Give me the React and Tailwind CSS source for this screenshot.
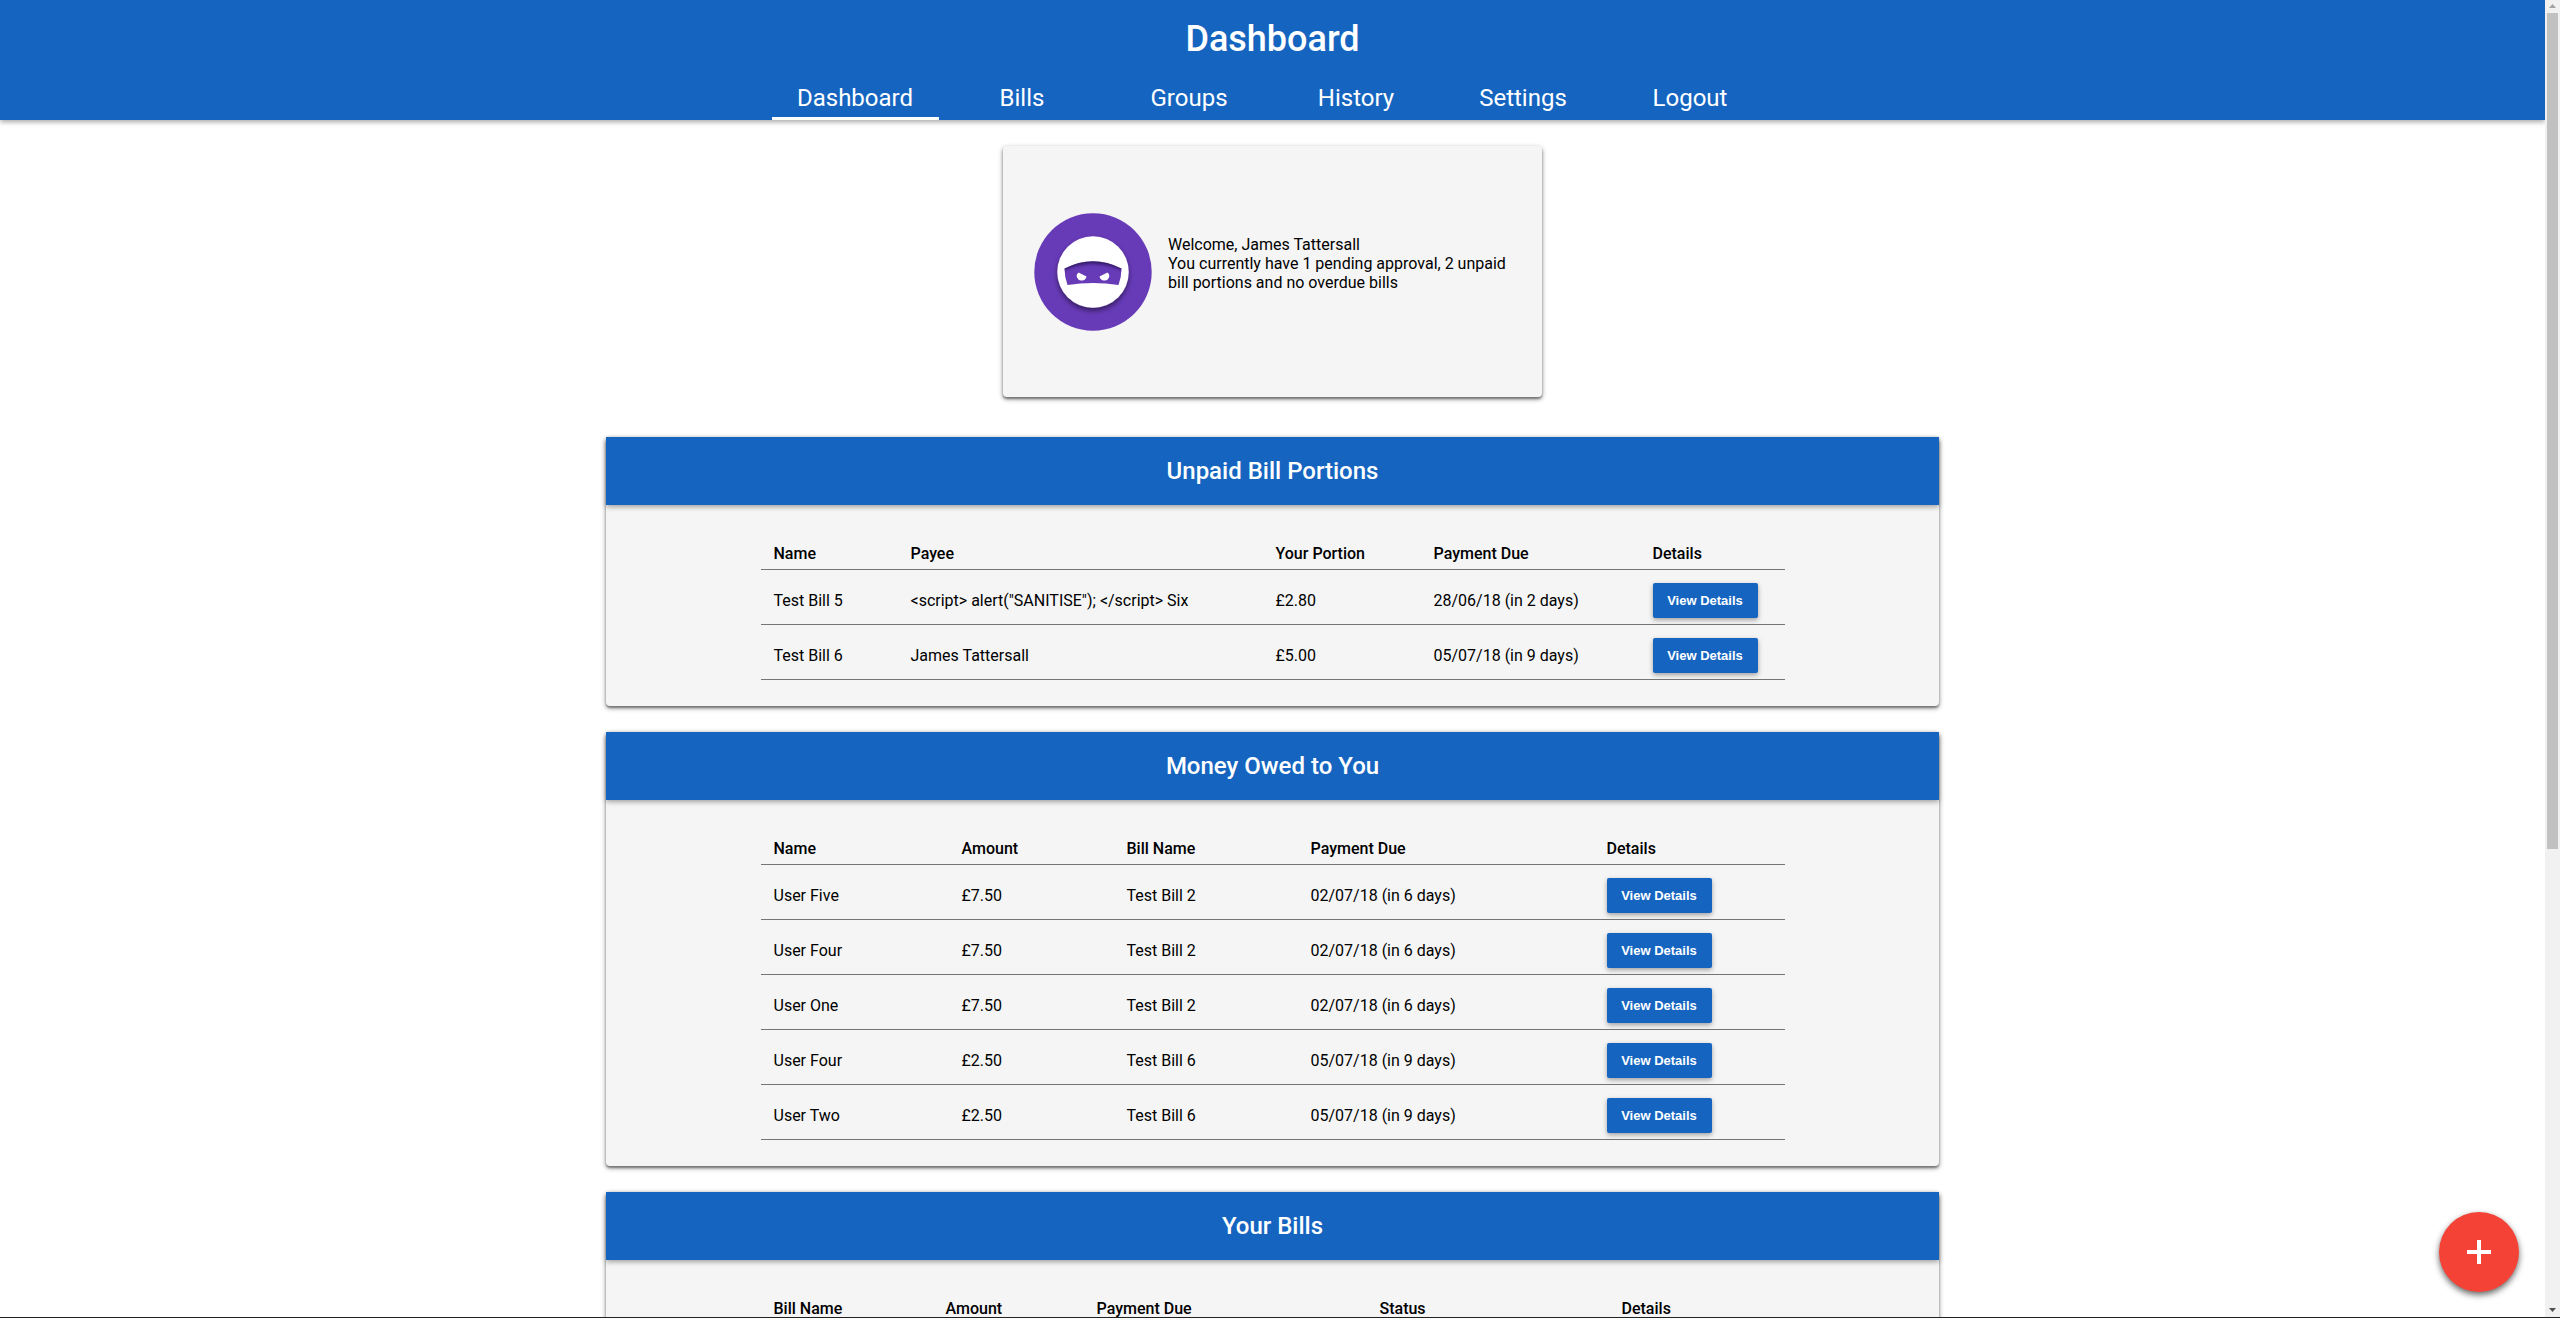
const navItems = ["Dashboard", "Bills", "Groups", "History", "Settings", "Logout"];

const sections = [
  {
    title: "Unpaid Bill Portions",
    columns: [
      { label: "Name", width: "w-[150px]" },
      { label: "Payee", width: "w-[365px]" },
      { label: "Your Portion", width: "w-[158px]" },
      { label: "Payment Due", width: "w-[219px]" },
      { label: "Details", width: "w-auto" },
    ],
    rows: [
      ["Test Bill 5", '<script> alert("SANITISE"); </script> Six', "£2.80", "28/06/18 (in 2 days)"],
      ["Test Bill 6", "James Tattersall", "£5.00", "05/07/18 (in 9 days)"],
    ],
  },
  {
    title: "Money Owed to You",
    columns: [
      { label: "Name", width: "w-[201px]" },
      { label: "Amount", width: "w-[165px]" },
      { label: "Bill Name", width: "w-[184px]" },
      { label: "Payment Due", width: "w-[296px]" },
      { label: "Details", width: "w-auto" },
    ],
    rows: [
      ["User Five", "£7.50", "Test Bill 2", "02/07/18 (in 6 days)"],
      ["User Four", "£7.50", "Test Bill 2", "02/07/18 (in 6 days)"],
      ["User One", "£7.50", "Test Bill 2", "02/07/18 (in 6 days)"],
      ["User Four", "£2.50", "Test Bill 6", "05/07/18 (in 9 days)"],
      ["User Two", "£2.50", "Test Bill 6", "05/07/18 (in 9 days)"],
    ],
  },
  {
    title: "Your Bills",
    columns: [
      { label: "Bill Name", width: "w-[185px]" },
      { label: "Amount", width: "w-[151px]" },
      { label: "Payment Due", width: "w-[283px]" },
      { label: "Status", width: "w-[242px]" },
      { label: "Details", width: "w-auto" },
    ],
    rows: [],
  },
];

function Header() {
  return (
    <header className="relative z-10 flex flex-col items-center gap-6 bg-[#1565c0] pt-[18px] text-white shadow-[0_2px_5px_rgba(0,0,0,0.35)]">
      <h1 className="text-4xl leading-[42px] font-medium">Dashboard</h1>
      <nav className="flex">
        {navItems.map((item, i) => (
          <a
            key={item}
            href="#"
            aria-current={i === 0 ? "page" : undefined}
            className={
              "w-[167px] border-b-3 pb-[5px] text-center text-2xl leading-[28px] " +
              (i === 0 ? "border-white" : "border-transparent")
            }
          >
            {item}
          </a>
        ))}
      </nav>
    </header>
  );
}

function NinjaAvatar() {
  return (
    <svg viewBox="0 0 118 118" className="size-[118px] shrink-0" role="img" aria-label="Avatar">
      <defs>
        <filter id="faceShadow" x="-20%" y="-20%" width="140%" height="150%">
          <feDropShadow dx="0" dy="3" stdDeviation="2.5" floodColor="#000" floodOpacity="0.5" />
        </filter>
        <clipPath id="maskClip">
          <path d="M30.5 55.5 Q59 41 87.5 55.5 Q87.5 64 84.5 72 Q59 68 33.5 72 Q30.5 64 30.5 55.5Z" />
        </clipPath>
        <filter id="soft" x="-20%" y="-60%" width="140%" height="220%">
          <feGaussianBlur stdDeviation="1.8" />
        </filter>
      </defs>
      <circle cx="59" cy="59" r="58.7" fill="#673ab7" />
      <circle cx="59" cy="59" r="35.7" fill="#fff" filter="url(#faceShadow)" />
      <g clipPath="url(#maskClip)">
        <rect x="26" y="44" width="66" height="32" fill="#673ab7" />
        <path d="M28 55.5 Q59 41 90 55.5" fill="none" stroke="#1d0a45" strokeWidth="5" opacity="0.7" filter="url(#soft)" />
      </g>
      <path d="M44.5 59.5 L52.5 63.5 Q51.5 67.5 48 67.5 A4.5 4.5 0 0 1 44.5 59.5Z" fill="#fff" />
      <path d="M73.5 59.5 L65.5 63.5 Q66.5 67.5 70 67.5 A4.5 4.5 0 0 0 73.5 59.5Z" fill="#fff" />
    </svg>
  );
}

function WelcomeCard() {
  return (
    <section className="mx-auto flex min-h-[251px] w-full max-w-[539px] items-center gap-4 rounded-sm bg-[#f5f5f5] px-[31px] shadow-[0_2px_2px_rgba(0,0,0,0.3),0_2px_5px_rgba(0,0,0,0.45)]">
      <NinjaAvatar />
      <p className="pb-4 text-base leading-[19px]">
        Welcome, James Tattersall
        <br />
        You currently have 1 pending approval, 2 unpaid bill portions and no overdue bills
      </p>
    </section>
  );
}

function BillSection({ title, columns, rows }) {
  return (
    <section className="mx-auto w-full max-w-[1333px] rounded-sm bg-[#f5f5f5] shadow-[0_2px_2px_rgba(0,0,0,0.3),0_2px_5px_rgba(0,0,0,0.45)]">
      <h2 className="bg-[#1565c0] py-5 text-center text-2xl leading-[28px] font-medium text-white shadow-[0_2px_5px_rgba(0,0,0,0.35)]">
        {title}
      </h2>
      <div className="mx-auto max-w-[1024px] pt-[39px] pb-[26px]">
        <table className="w-full table-fixed border-separate border-spacing-0 text-left text-base leading-[19px]">
          <thead>
            <tr>
              {columns.map((c) => (
                <th
                  key={c.label}
                  scope="col"
                  className={c.width + " border-b border-[#757575] p-0 pb-[6px] font-medium first:pl-[13px]"}
                >
                  {c.label}
                </th>
              ))}
            </tr>
          </thead>
          <tbody>
            {rows.map((row, i) => (
              <tr key={i}>
                {row.map((cell, j) => (
                  <td
                    key={j}
                    className="border-b border-[#757575] p-0 pt-[21px] pb-[14px] align-top first:pl-[13px]"
                  >
                    {cell}
                  </td>
                ))}
                <td className="border-b border-[#757575] p-0 pt-[13px] pb-[6px] align-top">
                  <button
                    type="button"
                    className="block h-[35px] min-w-[105px] rounded-xs bg-[#1565c0] px-[14px] font-['Liberation_Sans',Arial,sans-serif] text-[13px] leading-[15px] font-bold text-white shadow-[0_2px_5px_rgba(0,0,0,0.35)]"
                  >
                    View Details
                  </button>
                </td>
              </tr>
            ))}
          </tbody>
        </table>
      </div>
    </section>
  );
}

function Scrollbar() {
  return (
    <div aria-hidden="true" className="flex w-[15px] shrink-0 flex-col items-center bg-[#f1f1f1]">
      <svg viewBox="0 0 15 13" className="h-[13px] w-[15px] shrink-0">
        <path d="M4 8 L7.5 4 L11 8Z" fill="#a3a3a3" />
      </svg>
      <div className="w-[11px] grow-[836] basis-0 bg-[#c1c1c1]" />
      <div className="grow-[455] basis-0" />
      <svg viewBox="0 0 15 13" className="h-[13px] w-[15px] shrink-0">
        <path d="M4 4 L11 4 L7.5 8Z" fill="#505050" />
      </svg>
    </div>
  );
}

export default function App() {
  return (
    <div className="flex h-screen overflow-hidden border-b border-[#222] bg-white font-[Roboto,sans-serif] text-black">
      <div className="min-w-0 flex-1 overflow-hidden">
        <Header />
        <main className="flex flex-col pt-[26px]">
          <WelcomeCard />
          <div className="mt-10 flex flex-col gap-[26px]">
            {sections.map((s) => (
              <BillSection key={s.title} {...s} />
            ))}
          </div>
        </main>
      </div>
      <Scrollbar />
      <button
        type="button"
        aria-label="Add bill"
        className="fixed right-[41px] bottom-[26px] z-20 flex size-20 items-center justify-center rounded-full bg-[#f44336] text-white shadow-[0_3px_6px_rgba(0,0,0,0.6)]"
      >
        <svg viewBox="0 0 24 24" className="size-6" fill="currentColor">
          <path d="M10 0h4v10h10v4H14v10h-4V14H0v-4h10z" />
        </svg>
      </button>
    </div>
  );
}
